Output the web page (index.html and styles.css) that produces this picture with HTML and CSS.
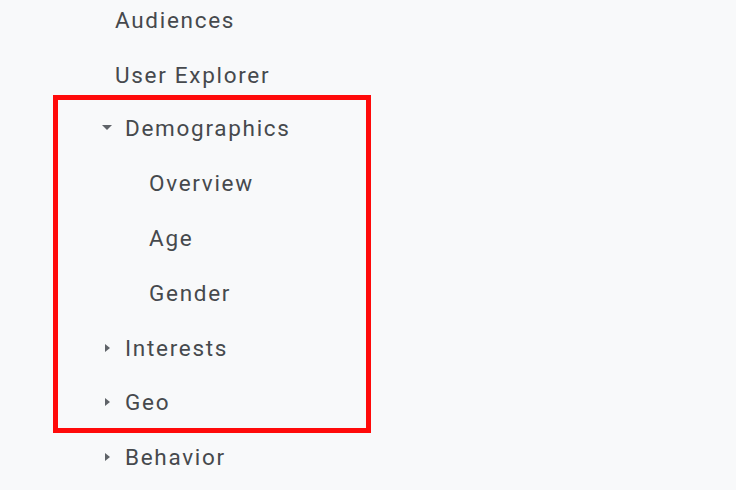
FILE: index.html
```html
<!DOCTYPE html>
<html lang="en">
<head>
    <meta charset="UTF-8">
    <title>Audience menu</title>
    <link rel="stylesheet" href="styles.css">
</head>
<body>
    <nav class="menu">
        <div class="item top">Audiences</div>
        <div class="item top">User Explorer</div>

        <div class="highlight">
            <div class="item branch">
                <span class="caret down"></span>
                <span>Demographics</span>
            </div>
            <div class="item sub">Overview</div>
            <div class="item sub">Age</div>
            <div class="item sub">Gender</div>
            <div class="item branch">
                <span class="caret"></span>
                <span>Interests</span>
            </div>
            <div class="item branch last">
                <span class="caret"></span>
                <span>Geo</span>
            </div>
        </div>

        <div class="item branch outside">
            <span class="caret"></span>
            <span>Behavior</span>
        </div>
    </nav>
</body>
</html>
```

FILE: styles.css
```css
body {
    margin: 0;
    background-color: #f8f9fa;
    font-family: Roboto, "Open Sans", sans-serif;
    color: #46494d;
    height: 490px;
    overflow: hidden;
}

.menu {
    margin-top: -8px;
    display: flex;
    flex-direction: column;
}

.item {
    height: 55px;
    display: flex;
    align-items: center;
    font-size: 22.5px;
    letter-spacing: 1.7px;
}

.top {
    padding-left: 115px;
}

.highlight {
    margin-left: 53px;
    width: 318px;
    box-sizing: border-box;
    border: 5px solid #ff0a0a;
    margin-top: -7px;
    margin-bottom: -4px;
}

.branch {
    padding-left: 44px;
    gap: 13px;
}

.branch.last {
    height: 53px;
}

.branch.outside {
    padding-left: 102px;
}

.sub {
    padding-left: 91px;
}

.caret {
    width: 10px;
    display: flex;
    justify-content: center;
}

.caret::before {
    content: "";
    border-top: 4.5px solid transparent;
    border-bottom: 4.5px solid transparent;
    border-left: 5px solid #5f6368;
}

.caret.down::before {
    border-left: 5px solid transparent;
    border-right: 5px solid transparent;
    border-top: 5px solid #5f6368;
    border-bottom: 0;
}
```
